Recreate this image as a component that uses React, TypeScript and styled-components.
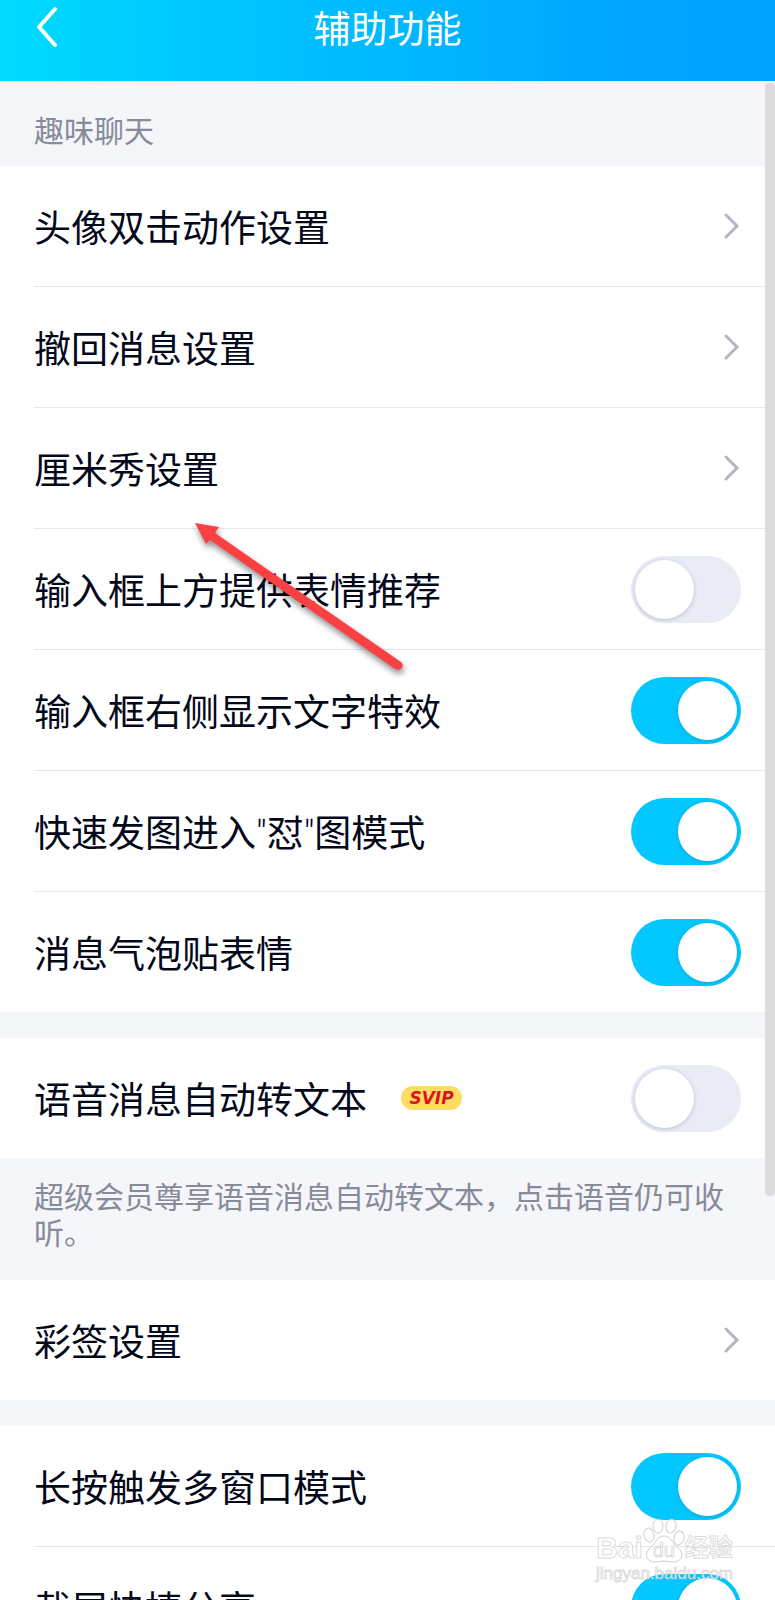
import React, { ReactNode, useId } from "react";
import styled, { createGlobalStyle } from "styled-components";

const GlobalStyle = createGlobalStyle`
  *, *::before, *::after { box-sizing: border-box; }
  body {
    margin: 0;
    font-family: "Noto Sans CJK SC", "Noto Sans", sans-serif;
    color: #03081a;
    background: #f4f6fa;
  }
`;

const Screen = styled.div`
  position: relative;
  display: flex;
  flex-direction: column;
  height: 100vh;
  overflow: hidden;
`;

const Header = styled.header`
  flex: none;
  display: grid;
  grid-template-columns: 96px 1fr 96px;
  align-items: center;
  padding-bottom: 27px;
  background: linear-gradient(90deg, #00dcff 0%, #00c8ff 24%, #00b9ff 50%, #00a6ff 80%, #00a2ff 100%);
`;

const BackButton = styled.button`
  display: flex;
  align-items: center;
  height: 54px;
  padding: 0 0 0 34px;
  border: 0;
  background: none;
  color: #fff;
`;

const Title = styled.h1`
  margin: 0;
  font-size: 37px;
  font-weight: 400;
  line-height: 54px;
  text-align: center;
  color: #fff;
`;

const Viewport = styled.div`
  position: relative;
  flex: 1;
  min-height: 0;
`;

const Scroller = styled.main`
  position: relative;
  height: 100%;
  overflow-y: auto;
  scrollbar-width: none;
`;

const ScrollThumb = styled.div`
  position: absolute;
  top: 2px;
  right: 0;
  bottom: 404px;
  width: 10px;
  border-radius: 4px;
  background: #dcdcdc;
`;

const SectionLabel = styled.h2`
  margin: 0;
  padding: 30px 34px 19px;
  font-size: 30px;
  font-weight: 400;
  line-height: 36px;
  color: #878b99;
`;

const Note = styled.p`
  margin: 0;
  padding: 19px 34px 31px;
  font-size: 30px;
  line-height: 36px;
  color: #878b99;
`;

const Group = styled.ul<{ $spaced?: boolean }>`
  margin: ${(p) => (p.$spaced ? "26px 0 0" : "0")};
  padding: 0 0 0 34px;
  list-style: none;
  background: #fff;
`;

const Item = styled.li`
  & + & {
    border-top: 1px solid #e6e7ea;
  }
`;

const Row = styled.div`
  display: flex;
  align-items: center;
  height: 120px;
  padding-right: 34px;
`;

const rowText = `
  flex: 1;
  display: flex;
  align-items: center;
  gap: 34px;
  font-size: 37px;
  line-height: 54px;
`;

const RowLabel = styled.label`
  ${rowText}
`;

const RowLink = styled.a`
  ${rowText}
  justify-content: space-between;
  color: inherit;
  text-decoration: none;
`;

const Latin = styled.span`
  font-family: Roboto, sans-serif;
  font-weight: 300;
  line-height: 1;
`;

const Badge = styled.span`
  width: 61px;
  height: 24px;
  border-radius: 12px;
  background: #ffdc62;
  color: #d8141c;
  font-family: "DejaVu Sans", sans-serif;
  font-size: 17px;
  font-style: italic;
  font-weight: 700;
  line-height: 24px;
  text-align: center;
`;

const Switch = styled.input`
  appearance: none;
  flex: none;
  display: flex;
  align-items: center;
  width: 110px;
  height: 67px;
  margin: 0;
  padding: 0 4px;
  border-radius: 34px;
  background: #e9ebf5;

  &::before {
    content: "";
    width: 59px;
    height: 59px;
    border-radius: 50%;
    background: #fff;
    box-shadow: 0 1px 4px rgba(60, 70, 110, 0.25);
  }

  &:checked {
    justify-content: flex-end;
    background: #03c8ff;
  }
`;

const Pointer = styled.svg`
  position: absolute;
  top: 434px;
  left: 188px;
  pointer-events: none;
  filter: drop-shadow(1px 4px 3px rgba(0, 0, 0, 0.45));
`;

const Watermark = styled.div`
  position: absolute;
  right: 42px;
  bottom: 16px;
  display: flex;
  flex-direction: column;
  align-items: center;
  font-family: "Liberation Sans", "Noto Sans CJK SC", sans-serif;
  color: rgba(255, 255, 255, 0.85);
  -webkit-text-stroke: 1px rgba(185, 185, 185, 0.5);
  pointer-events: none;
`;

const WatermarkBrand = styled.div`
  display: flex;
  align-items: flex-end;
  font-size: 30px;
  font-weight: 700;
  line-height: 32px;
`;

const WatermarkPaw = styled.span`
  position: relative;
  display: flex;
  justify-content: center;
  align-items: flex-end;
  width: 42px;
  height: 46px;
  font-size: 20px;
  line-height: 28px;

  svg {
    position: absolute;
    inset: 0;
  }
`;

const WatermarkDu = styled.span`
  position: relative;
  font-weight: 400;
`;

const WatermarkCjk = styled.span`
  font-size: 24px;
`;

const WatermarkSite = styled.div`
  font-size: 17px;
  line-height: 20px;
`;

const Chevron = () => (
  <svg width="18" height="26" viewBox="0 0 18 26" fill="none" stroke="#b4b6c2" strokeWidth="3" strokeLinecap="round" strokeLinejoin="miter" aria-hidden="true">
    <path d="M3 2L14 13L3 24" />
  </svg>
);

const LinkItem = ({ text }: { text: string }) => (
  <Item>
    <Row>
      <RowLink href="#">
        {text}
        <Chevron />
      </RowLink>
    </Row>
  </Item>
);

const SwitchItem = ({ text, on, badge }: { text: ReactNode; on?: boolean; badge?: string }) => {
  const id = useId();
  return (
    <Item>
      <Row>
        <RowLabel htmlFor={id}>
          <span>{text}</span>
          {badge && <Badge>{badge}</Badge>}
        </RowLabel>
        <Switch id={id} type="checkbox" role="switch" defaultChecked={on} />
      </Row>
    </Item>
  );
};

export default function App() {
  return (
    <Screen>
      <GlobalStyle />
      <Header>
        <BackButton type="button" aria-label="返回">
          <svg width="26" height="42" viewBox="0 0 26 42" fill="none" stroke="currentColor" strokeWidth="4" strokeLinecap="round" strokeLinejoin="round" aria-hidden="true">
            <path d="M21 3L5 21L21 39" />
          </svg>
        </BackButton>
        <Title>辅助功能</Title>
      </Header>
      <Viewport>
        <Scroller>
          <SectionLabel>趣味聊天</SectionLabel>
          <Group>
            <LinkItem text="头像双击动作设置" />
            <LinkItem text="撤回消息设置" />
            <LinkItem text="厘米秀设置" />
            <SwitchItem text="输入框上方提供表情推荐" />
            <SwitchItem text="输入框右侧显示文字特效" on />
            <SwitchItem
              text={
                <>
                  快速发图进入<Latin>"</Latin>怼<Latin>"</Latin>图模式
                </>
              }
              on
            />
            <SwitchItem text="消息气泡贴表情" on />
          </Group>
          <Group $spaced>
            <SwitchItem text="语音消息自动转文本" badge="SVIP" />
          </Group>
          <Note>超级会员尊享语音消息自动转文本，点击语音仍可收听。</Note>
          <Group>
            <LinkItem text="彩签设置" />
          </Group>
          <Group $spaced>
            <SwitchItem text="长按触发多窗口模式" on />
            <SwitchItem text="截屏快捷分享" on />
          </Group>
          <Pointer width="226" height="170" viewBox="0 0 226 170" fill="#fb4044" aria-hidden="true">
            <path d="M7 8L31 12L27 18L213 147Q216 150 214 153Q211 156 207 154L22 25L18 29Z" />
          </Pointer>
        </Scroller>
        <ScrollThumb />
      </Viewport>
      <Watermark>
        <WatermarkBrand>
          Bai
          <WatermarkPaw>
            <svg width="42" height="46" viewBox="0 0 42 46" fill="rgba(255,255,255,0.75)" stroke="rgba(185,185,185,0.7)" aria-hidden="true">
              <ellipse cx="6" cy="17" rx="5" ry="7" transform="rotate(-12 6 17)" />
              <ellipse cx="15" cy="8" rx="5" ry="7" />
              <ellipse cx="28" cy="8" rx="5" ry="7" transform="rotate(10 28 8)" />
              <ellipse cx="36" cy="20" rx="5" ry="7" transform="rotate(15 36 20)" />
              <path d="M21 18C28 18 29 25 34 29C43 36 38 44 30 44C26 44 24 43 21 43C18 43 16 44 12 44C2 44 1 34 8 29C13 25 14 18 21 18Z" />
            </svg>
            <WatermarkDu>du</WatermarkDu>
          </WatermarkPaw>
          <WatermarkCjk>经验</WatermarkCjk>
        </WatermarkBrand>
        <WatermarkSite>jingyan.baidu.com</WatermarkSite>
      </Watermark>
    </Screen>
  );
}
